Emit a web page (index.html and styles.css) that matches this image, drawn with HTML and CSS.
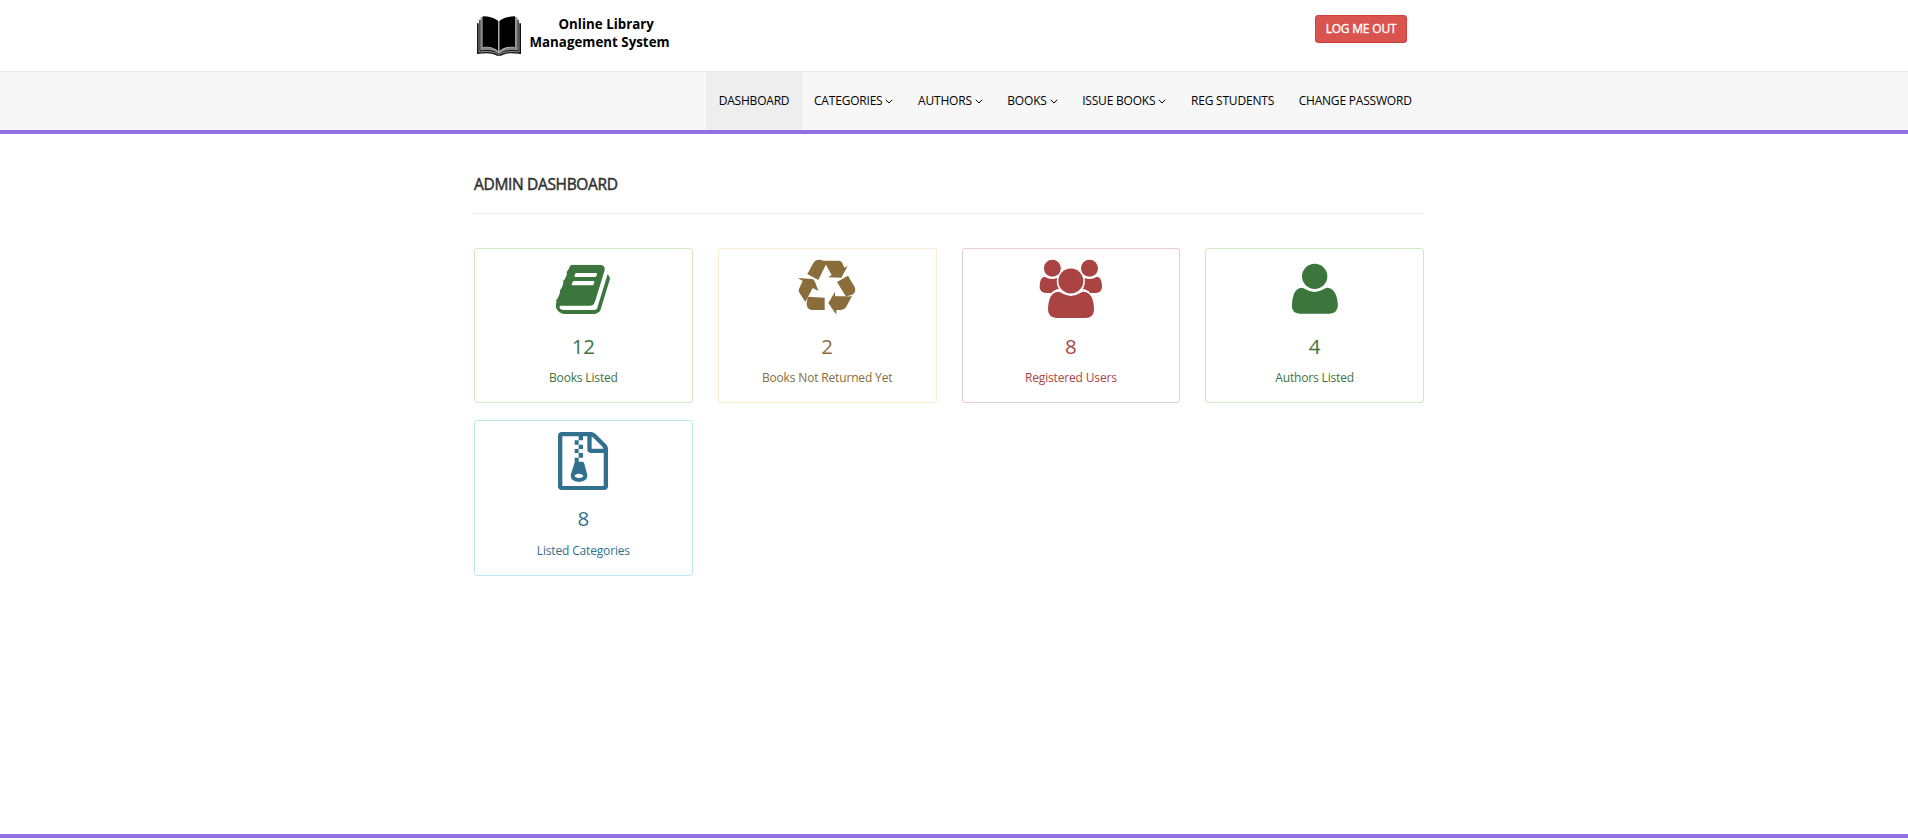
FILE: index.html
```html
<!DOCTYPE html>
<html lang="en">
<head>
<meta charset="utf-8">
<title>Online Library Management System | Admin Dashboard</title>
<link rel="stylesheet" href="styles.css">
</head>
<body>
<header class="header">
  <div class="container header-row">
    <a class="brand">
      <svg class="brand-icon" viewBox="36 44 138 126">
        <path d="M39 69H48V151Q84 148 105 160Q126 148 162 151V69H171V161Q132 155 117 163Q105 170 93 163Q78 155 39 161Z" fill="#111"/>
        <path d="M45 58H54V144Q84 141 105 157Q126 141 156 144V58H165V155Q128 150 105 162Q82 150 45 155Z" fill="#111" stroke="#ddd" stroke-width="2"/>
        <path d="M50 50H57V140Q86 137 105 154Q124 137 153 140V50H160V149Q127 144 105 158Q83 144 50 149Z" fill="#888" stroke="#eee" stroke-width="1"/>
        <path d="M56 48Q86 48 103 62V153Q86 136 56 140ZM153 48Q122 48 106 62V153Q123 136 153 140Z" fill="#000"/>
      </svg>
      <span class="brand-text"><span class="brand-top">Online Library</span><span class="brand-bottom">Management System</span></span>
    </a>
    <a class="logout">LOG ME OUT</a>
  </div>
</header>
<nav class="menu">
  <ul class="container menu-list">
    <li class="menu-item active">DASHBOARD</li>
    <li class="menu-item">CATEGORIES <svg class="caret" viewBox="0 0 8 5"><path d="M.8.8 4 4 7.2.8"/></svg></li>
    <li class="menu-item">AUTHORS <svg class="caret" viewBox="0 0 8 5"><path d="M.8.8 4 4 7.2.8"/></svg></li>
    <li class="menu-item">BOOKS <svg class="caret" viewBox="0 0 8 5"><path d="M.8.8 4 4 7.2.8"/></svg></li>
    <li class="menu-item">ISSUE BOOKS <svg class="caret" viewBox="0 0 8 5"><path d="M.8.8 4 4 7.2.8"/></svg></li>
    <li class="menu-item">REG STUDENTS</li>
    <li class="menu-item">CHANGE PASSWORD</li>
  </ul>
</nav>
<main class="container content">
  <h4 class="title">ADMIN DASHBOARD</h4>
  <div class="cards">
    <section class="card success">
      <svg class="icon" viewBox="238 267 240 210"><svg x="276" y="314" width="163" height="148" viewBox="60 128 1672 1536" preserveAspectRatio="none"><path d="M1703 478q40 57 18 129l-275 906q-19 64-76.5 107.5t-122.5 43.5h-923q-77 0-148.5-53.5t-99.5-131.5q-24-67-2-127 0-4 3-27t4-37q1-8-3-21.5t-3-19.5q2-11 8-21t16.5-23.5 16.5-23.5q23-38 45-91.5t30-91.5q3-10 .5-30t-.5-28q3-11 17-28t17-23q21-36 42-92t25-90q1-9-2.5-32t.5-28q4-13 22-30.5t22-22.5q19-26 42.5-84.5t27.5-96.5q1-8-3-25.5t-2-26.5q2-8 9-18t18-23 17-21q8-12 16.5-30.5t15-35 16-36 19.5-32 26.5-23.5 36-11.5 47.5 5.5l-1 3q38-9 51-9h761q74 0 114 56t18 130l-274 906q-36 119-71.5 153.5t-128.5 34.5h-869q-27 0-38 15-11 16-1 43 24 70 144 70h923q29 0 56-15.5t35-41.5l300-987q7-22 5-57 38 15 59 43zm-1064 2q-4 13 2 22.5t20 9.5h608q13 0 25.5-9.5t16.5-22.5l21-64q4-13-2-22.5t-20-9.5h-608q-13 0-25.5 9.5t-16.5 22.5zm-83 256q-4 13 2 22.5t20 9.5h608q13 0 25.5-9.5t16.5-22.5l21-64q4-13-2-22.5t-20-9.5h-608q-13 0-25.5 9.5t-16.5 22.5z"/></svg></svg>
      <h3 class="count">12</h3><p class="label">Books Listed</p>
    </section>
    <section class="card warning">
      <svg class="icon" viewBox="232 27 240 210">
        <path d="M293 102 311 69Q317 59 328 59Q344 59 350 71L326 120Z"/>
        <path d="M342 62H387Q394 62 398 69L404 83 414 78 395 113 355 112 366 105Z"/>
        <path d="M382 126 415 107 435 141Q439 149 436 155Q431 166 412 168H408Z"/>
        <path d="M427 168 409 202Q404 210 394 210H380V224L356 189 376 155V169H410Q420 170 427 168Z"/>
        <path d="M294 170 345 173V210H308Q290 209 291 190Z"/>
        <path d="M265 114 307 117Q313 118 316 125L326 153 309 144 287 186 268 156Q266 152 268 147L279 123Z"/>
      </svg>
      <h3 class="count">2</h3><p class="label">Books Not Returned Yet</p>
    </section>
    <section class="card danger">
      <svg class="icon" viewBox="243 27 240 210">
        <circle cx="307" cy="85" r="25.500"/><circle cx="418.500" cy="85" r="25.500"/><circle cx="362.500" cy="123" r="37.500"/>
        <path d="M284 110Q302 121 321 114Q318 133 327 147Q314 148 304 159H288Q269 158 269 141Q269 111 284 110ZM441 110Q423 121 404 114Q407 133 398 147Q411 148 421 159H437Q456 158 456 141Q456 111 441 110Z"/>
        <path d="M325 155Q330 155 336 160Q363 176 389 160Q395 155 400 155Q417 156 425 172Q432 187 432 211Q430 234 407 234H319Q296 233 294 211Q294 187 301 172Q309 156 325 155Z"/>
      </svg>
      <h3 class="count">8</h3><p class="label">Registered Users</p>
    </section>
    <section class="card success">
      <svg class="icon" viewBox="254.500 27 240 210">
        <circle cx="373.500" cy="109" r="38"/>
        <path d="M335 143Q340 143 346 148Q373 164 400 148Q406 143 412 143Q427 144 435 160Q443 176 443 199Q440 221 419 221H328Q306 220 305 199Q305 176 312 160Q320 144 335 143Z"/>
      </svg>
      <h3 class="count">4</h3><p class="label">Authors Listed</p>
    </section>
    <section class="card info">
      <svg class="icon" viewBox="238 33 240 210">
        <path fill-rule="evenodd" d="M292 66H384Q390 67 396 72L427 103Q432 108 433 115V231Q432 239 424 240H292Q284 239 283 231V75Q284 67 292 66ZM296 79V228H420V129H380Q372 128 371 121V79H358V91H345V79ZM384 80V116H419Q418 113 417 111L389 83Q387 81 384 80Z"/>
        <path d="M333 91h12v13h-12zM345 104h13v13h-13zM333 117h12v12h-12zM345 129h13v14h-13zM333 143h12v13h-12z"/>
        <path fill-rule="evenodd" d="M335 155H357Q361 157 362 161L371 195Q372 213 346 216Q320 213 321 195L333 157ZM346 191Q333 192 333 198Q334 203 346 204Q358 203 359 198Q358 192 346 191Z"/>
      </svg>
      <h3 class="count">8</h3><p class="label">Listed Categories</p>
    </section>
  </div>
</main>
<footer class="footer"></footer>
</body>
</html>
```
FILE: styles.css
```css
* { box-sizing: border-box; }
body {
  margin: 0;
  height: 840px;
  display: flex;
  flex-direction: column;
  background: #fff;
  color: #333;
  font: 12px/18px "Open Sans", sans-serif;
}
.container { width: 950px; margin: 0 0 0 474px; }
.header { height: 71px; }
.header-row { display: flex; justify-content: space-between; align-items: flex-start; }
.brand { display: flex; align-items: flex-start; padding: 14.7px 0 0 2px; color: #000; }
.brand-icon { width: 46px; height: 42px; }
.brand-text {
  display: flex;
  flex-direction: column;
  align-items: flex-start;
  margin: 0 0 0 7.5px;
  font-size: 13.3px;
  font-weight: 700;
  line-height: 18px;
  letter-spacing: .02px;
}
.brand-top { margin-left: 29px; }
.logout {
  width: 92px;
  height: 28px;
  margin: 15px 17px 0 0;
  border: 1px solid #d43f3a;
  border-radius: 3px;
  background: #d9534f;
  color: #fff;
  text-align: center;
  line-height: 26px;
  letter-spacing: -.2px;
  -webkit-text-stroke: .35px #fff;
}
.menu {
  height: 63px;
  border-top: 1px solid #e7e7e7;
  border-bottom: 4px solid #9170e4;
  background: #f7f7f7;
}
.menu-list { display: flex; justify-content: flex-end; padding: 0; list-style: none; }
.menu-item {
  height: 58px;
  padding: 0 12.32px;
  line-height: 58px;
  letter-spacing: -.2px;
  color: #000;
  white-space: nowrap;
}
.active { background: #eee; }
.caret { width: 8px; height: 5px; vertical-align: 1px; fill: none; stroke: #000; }
.content { flex: 1; }
.title {
  height: 80px;
  margin: 0 0 34px;
  padding-top: 40px;
  border-bottom: 1px solid #eee;
  font-size: 15.5px;
  font-weight: 400;
  line-height: 20px;
  letter-spacing: -.33px;
  -webkit-text-stroke: .5px #333;
}
.cards { display: grid; grid-template-columns: repeat(4, 1fr); gap: 17px 25px; }
.card {
  display: flex;
  flex-direction: column;
  align-items: center;
  height: 155.3px;
  border: 1px solid;
  border-radius: 3px;
}
.icon { width: 80px; height: 70px; fill: currentColor; }
.count { margin: 14px 0 10.3px; font-size: 20.5px; font-weight: 400; line-height: 26px; }
.label { margin: 0; line-height: 17px; letter-spacing: -.16px; }
.success { color: #3c763d; border-color: #d0e9c0; }
.warning { color: #8a6d3b; border-color: #faebcc; }
.danger { color: #a94442; border-color: #ebccd1; }
.info { color: #31708f; border-color: #bce8f1; }
.footer { height: 6px; border-top: 4px solid #9170e4; background: #f7f7f7; }
```
